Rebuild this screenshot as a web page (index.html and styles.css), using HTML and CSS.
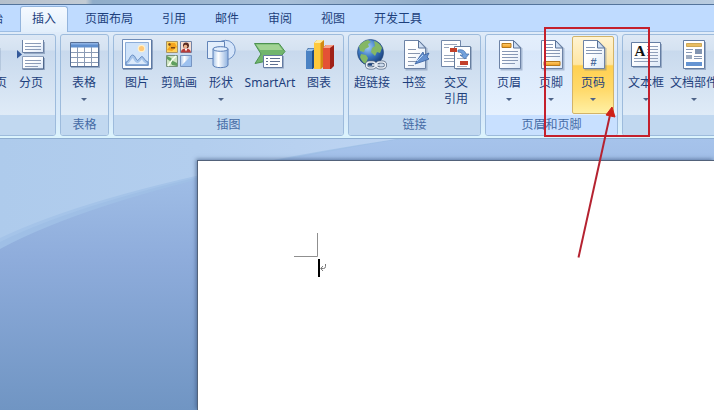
FILE: index.html
```html
<!DOCTYPE html>
<html lang="zh-CN">
<head>
<meta charset="utf-8">
<title>文档</title>
<link rel="stylesheet" href="styles.css">
</head>
<body>
<svg class="defs" width="0" height="0" aria-hidden="true">
  <defs>
    <linearGradient id="paper" x1="0" y1="0" x2="1" y2="1"><stop offset="0.4" stop-color="#fff"/><stop offset="1" stop-color="#dce8f8"/></linearGradient>
    <linearGradient id="orange" x1="0" y1="0" x2="0" y2="1"><stop offset="0" stop-color="#ffd070"/><stop offset="1" stop-color="#f09a1c"/></linearGradient>
    <linearGradient id="blue" x1="0" y1="0" x2="1" y2="0"><stop offset="0" stop-color="#a8c6ea"/><stop offset="0.35" stop-color="#fff"/><stop offset="1" stop-color="#8fb2e0"/></linearGradient>
    <radialGradient id="globe" cx="0.4" cy="0.3" r="0.75"><stop offset="0" stop-color="#a5d0f8"/><stop offset="0.5" stop-color="#3b77c2"/><stop offset="1" stop-color="#12366f"/></radialGradient>
    <g id="sheet"><path d="M7.5 3.500v29h22v-22l-7-7z" fill="#49628a" opacity=".35"/><path d="M6.500 2.500v28h21v-20.500l-7-7.500z" fill="url(#paper)" stroke="#6d83a6"/><path d="M20.500 2.500v7.500h7z" fill="#cfdff4" stroke="#5b7398"/></g>
  </defs>
</svg>

<div class="titlebar"></div>
<nav class="tabs">
  <button class="tab">开始</button>
  <button class="tab active">插入</button>
  <button class="tab">页面布局</button>
  <button class="tab">引用</button>
  <button class="tab">邮件</button>
  <button class="tab">审阅</button>
  <button class="tab">视图</button>
  <button class="tab">开发工具</button>
</nav>

<div class="ribbon">
  <section class="group">
    <div class="tools">
      <button class="tool"><svg class="icon" viewBox="2 0 32 32"><use href="#sheet"/></svg><span>空白页</span></button>
      <button class="tool"><svg class="icon" viewBox="0 0 32 32"><path d="M9 4h21v12H9zM9 20h21v12H9z" fill="#49628a" opacity=".4"/><path d="M7 2v12.500h21.500V2" fill="url(#paper)"/><path d="M7.500 2v12.500h21V2" fill="none" stroke="#6c82a5"/><path d="M7.500 31V18.500h21V31z" fill="url(#paper)" stroke="#8da0bd"/><path d="M28.500 19v12h-21" fill="none" stroke="#4f678c"/><path d="M10 5.500h16M10 8.500h16M10 11.500h16M10 22.500h16M10 25.500h16M10 28.500h13" stroke="#8c9cb8"/><path d="M2 12l5 4.500-5 4z" fill="#33599a"/></svg><span>分页</span></button>
    </div>
    <div class="caption"></div>
  </section>

  <section class="group">
    <div class="tools">
      <button class="tool"><svg class="icon" viewBox="0 0 32 32"><path d="M3 6h29v24H3z" fill="#49628a" opacity=".4"/><path d="M2.500 4.500h28v24h-28z" fill="#fff" stroke="#566f96"/><path d="M3 5h27v4.500H3z" fill="#5f8fce"/><path d="M3 5h27v1.500H3z" fill="#8db2e4"/><path d="M9.500 9v19M16.500 9v19M23.500 9v19M3 14.500h27M3 19.500h27M3 24.500h27" stroke="#8b9bb5"/></svg><span>表格</span><i class="drop"></i></button>
    </div>
    <div class="caption">表格</div>
  </section>

  <section class="group">
    <div class="tools">
      <button class="tool"><svg class="icon" viewBox="0 0 32 32"><path d="M1.500 1.500h29v29h-29z" fill="#fbfdff" stroke="#6e8cb8"/><path d="M31 2v29H2" fill="none" stroke="#4d678f"/><path d="M4.500 4.500h23v23h-23z" fill="#cfe3fa" stroke="#8cadd8"/><circle cx="20.500" cy="10.500" r="3.800" fill="#fff0c8"/><circle cx="20.500" cy="10.500" r="2.600" fill="#ffc878"/><path d="M5 24c3 0 4-7 6.500-7s3 4 5 5.500c2-1 3-4 4.500-4s3 5 6 5.500v3H5z" fill="#a6c5eb" stroke="#6289bf" stroke-width=".9"/><path d="M6 26c3-1 4-5 6-6 1 3 3 5 5 5 2-1 3-3 4-4 1 3 3 4 5 5z" fill="#dceafb"/></svg><span>图片</span></button>
      <button class="tool"><svg class="icon" viewBox="0 0 32 32"><path d="M3.500 3.500h11v11h-11z" fill="#ffd35c" stroke="#a99565"/><path d="M4 12l3-4-2-3h7l2 4-5 4z" fill="#f5a51d"/><path d="M5 6l2-1 1 2-2 1zM8 9h4v1.500H8z" fill="#7a4716"/><path d="M17.500 3.500h11v11h-11z" fill="#f5ddd2" stroke="#7284a6"/><circle cx="23" cy="7.500" r="3" fill="#5b2c22"/><circle cx="22.500" cy="8.500" r="1.800" fill="#efb48c"/><path d="M18 14.500c0-3 2-4 5-4s5 2 5 4z" fill="#b83a38"/><path d="M21.500 10.500l1.500 3 1.500-3z" fill="#fff"/><path d="M3.500 17.500h11v11h-11z" fill="#cde3c0" stroke="#77907b"/><path d="M4 18l4 2 2 3 4 2v3l-5-1-2-4-3-2z" fill="#5f9f5d"/><path d="M13 18l-4 4-4 6" stroke="#f8fff0" stroke-width="1.500" fill="none"/><path d="M17.500 17.500h11v11h-11z" fill="url(#blue)" stroke="#7795c2"/><path d="M18 28l10-10v10z" fill="#9dc1ef"/></svg><span>剪贴画</span></button>
      <button class="tool"><svg class="icon" viewBox="0 0 32 32"><circle cx="20.500" cy="12" r="9.700" fill="#d5e5fa" stroke="#6c8fc4"/><path d="M2.500 3.500h17v17h-17z" fill="#e4effc" stroke="#6284b8"/><path d="M8 11c0-2.500 15-2.500 15 0v16c0 3.500-15 3.500-15 0z" fill="url(#blue)" stroke="#5c80b8"/><ellipse cx="15.500" cy="11" rx="7.500" ry="2.300" fill="#e3effd" stroke="#5c80b8"/></svg><span>形状</span><i class="drop"></i></button>
      <button class="tool smart"><svg class="icon" viewBox="0 0 32 32"><path d="M.5 5.500H25l6 8-6 7-24 5 6-9.500z" fill="#71b56d" stroke="#4c9250"/><path d="M2 6.500h22.500l4 5.500H6z" fill="#a1d393"/><path d="M10 18h20v12.500H10z" fill="#49628a" opacity=".4"/><path d="M9.500 17.500h19v12h-19z" fill="#fff" stroke="#647ba2"/><path d="M12 20.500h2M12 23.500h2M12 26.500h2M16 20.500h10M16 23.500h10M16 26.500h8" stroke="#5d6f90"/></svg><span>SmartArt</span></button>
      <button class="tool"><svg class="icon" viewBox="0 0 32 32"><path d="M3 13l2-3h7v18l-2 3H3z" fill="#204d86"/><path d="M3 13h6v18H3z" fill="#4a82c4"/><path d="M3 13l2.500-2.500H12L9 13z" fill="#9cc4ee"/><path d="M11 5l3-3h7v26l-3 3h-7z" fill="#d28a12"/><path d="M11 5h6.500v26H11z" fill="#ffc93b"/><path d="M11 5l3-3h7l-3.500 3z" fill="#ffeba0"/><path d="M20 10l3-3h8v21l-3 3h-8z" fill="#9f2118"/><path d="M20 10h7v21h-7z" fill="#e45135"/><path d="M20 10l3-3h8l-4 3z" fill="#f7a389"/></svg><span>图表</span></button>
    </div>
    <div class="caption">插图</div>
  </section>

  <section class="group">
    <div class="tools">
      <button class="tool"><svg class="icon" viewBox="0 0 32 32"><circle cx="14.500" cy="14.500" r="13" fill="url(#globe)" stroke="#274a7d" stroke-width=".7"/><path d="M3 8c2-3 5-5 9-6l3 2-3 2 1 3-4 2-1 3-4-1zM5 16l5 1 2 3-2 6c-3-1-5-4-6-7zM18 3c4 1 7 4 8 7l-2 5-3-1-2 4-4-4 1-4 3-2z" fill="#84b765"/><g fill="none" stroke="#52657f" stroke-width="3"><rect x="10.500" y="24" width="9" height="6" rx="3"/><rect x="20.500" y="24" width="9" height="6" rx="3"/><path d="M16 27h8"/></g><g fill="none" stroke="#e6ecf4" stroke-width="1.500"><rect x="10.500" y="24" width="9" height="6" rx="3"/><rect x="20.500" y="24" width="9" height="6" rx="3"/><path d="M16 27h8"/></g></svg><span>超链接</span></button>
      <button class="tool"><svg class="icon" viewBox="0 0 32 32"><use href="#sheet"/><path d="M10 11.500h8M10 15.500h12M10 19.500h8M10 23.500h9M10 27.500h6" stroke="#8896af"/><path d="M17 26l5-8 3-4 1 3 5-2-2 4 2 2-5 2-3 1z" fill="#6490cf" stroke="#365f9f" stroke-width=".8"/><path d="M19 23l6-6" stroke="#bfdbfb"/></svg><span>书签</span></button>
      <button class="tool"><svg class="icon" viewBox="0 0 32 32"><path d="M1.500 2.500h19v26h-19z" fill="#fff" stroke="#7288aa"/><path d="M4 6.500h13M4 9.500h5M4 17.500h13M4 20.500h10M4 23.500h10" stroke="#96a4bb"/><path d="M16 9h16v23H16z" fill="#49628a" opacity=".35"/><path d="M14.500 8.500h16v22h-16z" fill="#fff" stroke="#667e9f"/><path d="M10 10h7v4h-7z" fill="#c3402a"/><path d="M17 20.500h10M17 28.500h10" stroke="#a4b0c3"/><path d="M20 23h8v4h-8z" fill="#c3402a"/><path d="M18 12c5-1 7 1 8 4h3l-4 5-5-4h3c-1-2-3-3-5-3z" fill="#72a1dc" stroke="#3f6ba8" stroke-width=".7"/></svg><span>交叉<br>引用</span></button>
    </div>
    <div class="caption">链接</div>
  </section>

  <section class="group hot">
    <div class="tools">
      <button class="tool"><svg class="icon" viewBox="0 0 32 32"><use href="#sheet"/><path d="M9 5.500h9v4H9z" fill="url(#orange)" stroke="#b4781d"/><path d="M9 13.500h16M9 16.500h16M9 19.500h16M9 22.500h16M9 25.500h13" stroke="#8798b5"/></svg><span>页眉</span><i class="drop"></i></button>
      <button class="tool"><svg class="icon" viewBox="0 0 32 32"><use href="#sheet"/><path d="M9 6.500h9M9 9.500h9M9 12.500h16M9 15.500h16M9 18.500h16" stroke="#8798b5"/><path d="M9 23.500h16v4H9z" fill="url(#orange)" stroke="#b4781d"/></svg><span>页脚</span><i class="drop"></i></button>
      <button class="tool selected"><svg class="icon" viewBox="0 0 32 32"><use href="#sheet"/><path d="M9 9.500h9M9 12.500h16M9 15.500h16" stroke="#8798b5"/><text x="16.500" y="28" text-anchor="middle" class="hash">#</text></svg><span>页码</span><i class="drop"></i></button>
    </div>
    <div class="caption">页眉和页脚</div>
  </section>

  <section class="group">
    <div class="tools">
      <button class="tool"><svg class="icon" viewBox="0 0 32 32"><path d="M3 6h29v24H3z" fill="#49628a" opacity=".4"/><path d="M1.500 4.500h29v24h-29z" fill="url(#paper)" stroke="#647da3"/><path d="M17 8.500h11M17 11.500h11M17 14.500h11M17 17.500h11M4 20.500h24M4 23.500h24" stroke="#8f9fba"/><text x="10" y="18" text-anchor="middle" class="letter">A</text></svg><span>文本框</span><i class="drop"></i></button>
      <button class="tool wide"><svg class="icon" viewBox="0 0 32 32"><path d="M7 4h21v28H7z" fill="#49628a" opacity=".4"/><path d="M5.500 2.500h21v28h-21z" fill="#fff" stroke="#647da3"/><path d="M8.500 5.500h15v3h-15z" fill="#e9bd62" stroke="#cda858"/><path d="M8 11.500h7M8 14.500h6" stroke="#8798b5"/><path d="M17 11h7v5h-7z" fill="#8295b2"/><path d="M8 17h6v4H8z" fill="#9dabc0"/><path d="M16 18.500h8M16 20.500h8" stroke="#8798b5"/><path d="M8 24h16v4H8z" fill="#6594d2"/></svg><span>文档部件</span><i class="drop"></i></button>
    </div>
    <div class="caption"></div>
  </section>
</div>

<main class="workspace">
  <svg class="swoosh" width="714" height="272" viewBox="0 0 714 272" aria-hidden="true">
    <defs><linearGradient id="sky" x1="0" y1="0" x2="1" y2="0"><stop offset="0" stop-color="#aecbec"/><stop offset=".5" stop-color="#b3ceee"/><stop offset="1" stop-color="#bdd4f2"/></linearGradient></defs>
    <path d="M0 0H400Q120 46 0 110z" fill="#9fbfe6"/>
    <path d="M0 0H398Q120 44 0 103z" fill="#a5c4e9"/>
    <path d="M0 0H396Q120 42 0 99z" fill="url(#sky)"/>
  </svg>
  <article class="page">
    <svg class="corner" width="24" height="24" viewBox="0 0 24 24" aria-hidden="true"><path d="M23.500 0v23.500H0" fill="none" stroke="#8f8f8f"/></svg>
    <p class="line"><i class="caret"></i><svg width="7" height="8" viewBox="0 0 7 8" aria-hidden="true"><path d="M5.500 0v2.500q0 2-2 2H1M3 2L.7 4.500 3 7" fill="none" stroke="#777"/></svg></p>
  </article>
</main>

<svg class="callout" width="110" height="240" viewBox="0 0 110 240" aria-hidden="true">
  <rect x="2" y="3" width="104" height="108" fill="none" stroke="#c4202c" stroke-width="2"/>
  <path d="M35.500 232.500L67 90" stroke="#b52230" stroke-width="2" fill="none"/>
  <path d="M69 82l3 10-9-2z" fill="#cf2018" stroke="#cf2018"/>
</svg>
</body>
</html>
```
FILE: styles.css
```css
* {
  box-sizing: border-box;
}

body {
  margin: 0;
  min-height: 100vh;
  display: flex;
  flex-direction: column;
  position: relative;
  overflow: hidden;
  font: 12px/18px "Noto Sans", "Noto Sans CJK SC", sans-serif;
  color: #1d3f7c;
  background: #bfdbff;
}

button {
  margin: 0;
  padding: 0;
  border: 0;
  background: none;
  font: inherit;
  color: inherit;
}

.defs {
  position: absolute;
}

.titlebar {
  flex: none;
  height: 5px;
  background: linear-gradient(90deg, #b4bfcb, #c3cbd4 12%, #8facc9 13%, #a8bfd8 40%, #93adc9 60%, #b9cce0);
  border-bottom: 1px solid #54749b;
}

.tabs {
  flex: none;
  display: flex;
  gap: 5px;
  height: 27px;
  margin-left: -33px;
  padding-top: 1px;
  border-bottom: 1px solid #9dbde3;
  background: #bfdbff;
}

.tab {
  flex: none;
  height: 26px;
  padding: 0 12px;
  white-space: nowrap;
}

.tab.active {
  border: 1px solid #93b4dc;
  border-bottom: 0;
  border-radius: 3px 3px 0 0;
  padding: 0 11px 1px;
  background: linear-gradient(#f5faff, #e2eefb);
}

.ribbon {
  flex: none;
  display: flex;
  gap: 4px;
  padding: 2px 0;
  background: linear-gradient(#e0ecf9, #cfe0f3 20%, #d8eafa 80%, #dcf4fd);
  border-bottom: 1px solid #8eadd0;
  overflow: hidden;
}

.ribbon .group:first-child {
  margin-left: -35px;
}

.group {
  flex: none;
  display: flex;
  flex-direction: column;
  border: 1px solid #9dbbdc;
  border-radius: 3px;
  background: linear-gradient(#dde8f5, #d5e2f1 15%, #c8d9ed 16%, #dfebf7 80%);
  overflow: hidden;
}

.group.hot {
  background: linear-gradient(#e4effc, #e0ecfb 15%, #d8e7fa 16%, #e6f1fe 80%);
}

.tools {
  display: flex;
  height: 80px;
  padding: 1px 3px 1px 2px;
}

.tool {
  flex: none;
  width: 42px;
  display: flex;
  flex-direction: column;
  align-items: center;
  padding-top: 2px;
  line-height: 16px;
  white-space: nowrap;
}

.tool span {
  margin-top: 5px;
}

.smart {
  width: 56px;
}

.wide {
  width: 54px;
}

.selected {
  border: 1px solid #d3b469;
  border-radius: 2px;
  padding-top: 1px;
  background: linear-gradient(#fff3d2, #ffe6a2 36%, #ffd050 38%, #ffda6c 70%, #fff0a4);
}

.icon {
  width: 32px;
  height: 32px;
  flex: none;
  overflow: visible;
}

.drop {
  margin-top: 7px;
  border: 3px solid transparent;
  border-top-color: #4d6388;
  border-bottom: 0;
}

.caption {
  height: 20px;
  line-height: 20px;
  text-align: center;
  color: #456ba5;
  background: #c1d8f0;
}

.hot .caption {
  background: #c8e0ff;
}

.hash {
  font: bold 11px "Liberation Sans", sans-serif;
  fill: #4c6c9d;
}

.letter {
  font: bold 15px "Liberation Serif", serif;
  fill: #111;
}

.workspace {
  flex: 1;
  display: flex;
  position: relative;
  padding: 21px 0 0 197px;
  background: linear-gradient(#a6c3eb, #9cbae4 20%, #8eacdb 45%, #7095c3);
}

.swoosh {
  position: absolute;
  left: 0;
  top: 0;
}

.page {
  flex: 1;
  position: relative;
  padding: 72px 0 0 96px;
  border: solid #52627a;
  border-width: 1px 0 0 1px;
  background: #fff;
  box-shadow: -1px -1px 4px rgba(50, 75, 115, 0.6);
}

.corner {
  display: block;
}

.line {
  display: flex;
  align-items: center;
  margin: 2px 0 0 24px;
}

.caret {
  width: 2px;
  height: 18px;
  background: #000;
}

.callout {
  position: absolute;
  left: 543px;
  top: 25px;
}
```
